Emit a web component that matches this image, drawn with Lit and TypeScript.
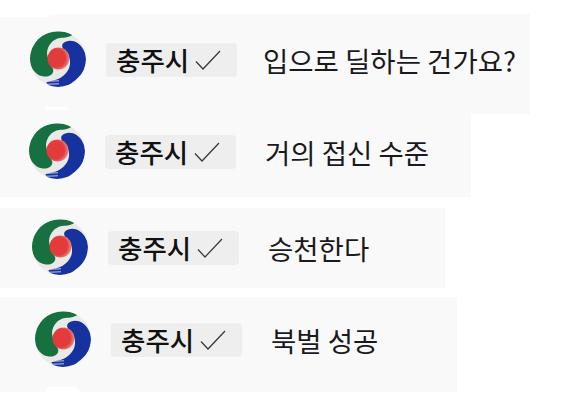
import { LitElement, html, css, svg } from "lit";
import { customElement } from "lit/decorators.js";

const logo = svg`<svg class="logo" viewBox="0 0 56 56" aria-hidden="true">
  <defs>
    <radialGradient id="red" cx="0.4" cy="0.48" r="0.68">
      <stop offset="0.6" stop-color="#e33a3b"/>
      <stop offset="0.85" stop-color="#e8837a"/>
      <stop offset="1" stop-color="#e8c4ba"/>
    </radialGradient>
    <clipPath id="disc"><circle cx="28" cy="28" r="28"/></clipPath>
    <filter id="soft" x="-5%" y="-5%" width="110%" height="110%"><feGaussianBlur stdDeviation="0.35"/></filter>
  </defs>
  <g filter="url(#soft)">
    <circle cx="28" cy="28" r="28" fill="#e9e9e7"/>
    <g clip-path="url(#disc)">
      <path d="M43 3.500C34 -1 20 -1 10 6C2 12 -1 22 0 31C1.500 39 7 45 14 45.500C20 46 24.500 42.500 23 38C21 33 17.500 28.500 17 22C17.500 14 23 8 30 7C35 6.500 39 6.500 43 3.500Z" fill="#13703f"/>
      <path d="M33 12.500C36.500 9 43 9 47.500 12C53 16 56 22 56 29C56 37 52 44 45 49.500C38 54.500 28 56 18 53C15.500 52 16.500 50.500 19 50.200C25 49.500 29.500 48 33 45C38 41 40.500 36 40 30C39.500 25 36 21.500 34 19C32 16.500 31.500 14 33 12.500Z" fill="#17319f"/>
      <path d="M17 52C26 52 34 52 44 49.500L38 57L20 57Z" fill="#17319f"/>
      <path d="M11 50.500L29 49.800M15 53.300L29 52.800" stroke="#eeeef4" stroke-width="0.800" fill="none"/>
    </g>
    <circle cx="28.500" cy="27.500" r="11" fill="url(#red)"/>
  </g>
</svg>`;

const check = svg`<svg class="check" viewBox="0 0 26 22" aria-hidden="true"><path d="M1 11.500L8 19L25 1" fill="none" stroke="#33343a" stroke-width="1.200"/></svg>`;

@customElement("app-root")
export class AppRoot extends LitElement {
  static styles = css`
    :host { display: block; width: 570px; height: 400px; overflow: hidden; background: #fff;
      font-family: "Noto Sans CJK KR", "Noto Sans", sans-serif; color: #1b1b1d; }
    .list { display: flex; flex-direction: column; align-items: flex-start; padding-top: 14px; }
    .row { position: relative; display: flex; align-items: center; box-sizing: border-box; background: #f9f9f9; }
    .r1 { width: 530px; height: 100px; padding: 0 0 10px 30px; }
    .r2 { width: 471px; height: 83px; padding: 0 0 9px 29px; }
    .r3 { width: 445px; height: 80px; padding: 0 0 2px 32px; margin-top: 11px; }
    .r4 { width: 457px; height: 95px; padding: 0 0 11px 35px; margin-top: 9px; }
    .r1::before { content: ""; position: absolute; left: 0; top: 0; width: 49px; height: 3px; background: #fff; }
    .r1::after { content: ""; position: absolute; left: 45px; top: 93px; width: 23px; height: 3px; background: #fff; border-radius: 2px; }
    .r4::after { content: ""; position: absolute; left: 45px; bottom: 0; width: 35px; height: 5px; background: #fff; border-radius: 18px 18px 0 0; }
    .logo { width: 56px; height: 56px; flex: none; display: block; }
    .pill { display: flex; align-items: center; box-sizing: border-box; width: 131px; height: 34px;
      margin: 2px 0 0 20px; padding-left: 10px; background: #eeeeee; border-radius: 4px; }
    .name { font-size: 26.500px; line-height: 34px; font-weight: 500; color: #111; }
    .check { width: 26px; height: 22px; margin-left: 6px; margin-top: 2px; flex: none; }
    .msg { font-size: 27.500px; line-height: 34px; margin-top: 2px; font-weight: 400; color: #1a1a1c; }
    .r1 .msg { margin-left: 26px; }
    .r2 .msg { margin-left: 29px; }
    .r3 .msg { margin-left: 29px; }
    .r4 .msg { margin-left: 29px; }
  `;

  private row(cls: string, text: string) {
    return html`<div class="row ${cls}">
      ${logo}
      <div class="pill"><span class="name">충주시</span>${check}</div>
      <span class="msg">${text}</span>
    </div>`;
  }

  render() {
    return html`<div class="list">
      ${this.row("r1", "입으로 딜하는 건가요?")}
      ${this.row("r2", "거의 접신 수준")}
      ${this.row("r3", "승천한다")}
      ${this.row("r4", "북벌 성공")}
    </div>`;
  }
}
